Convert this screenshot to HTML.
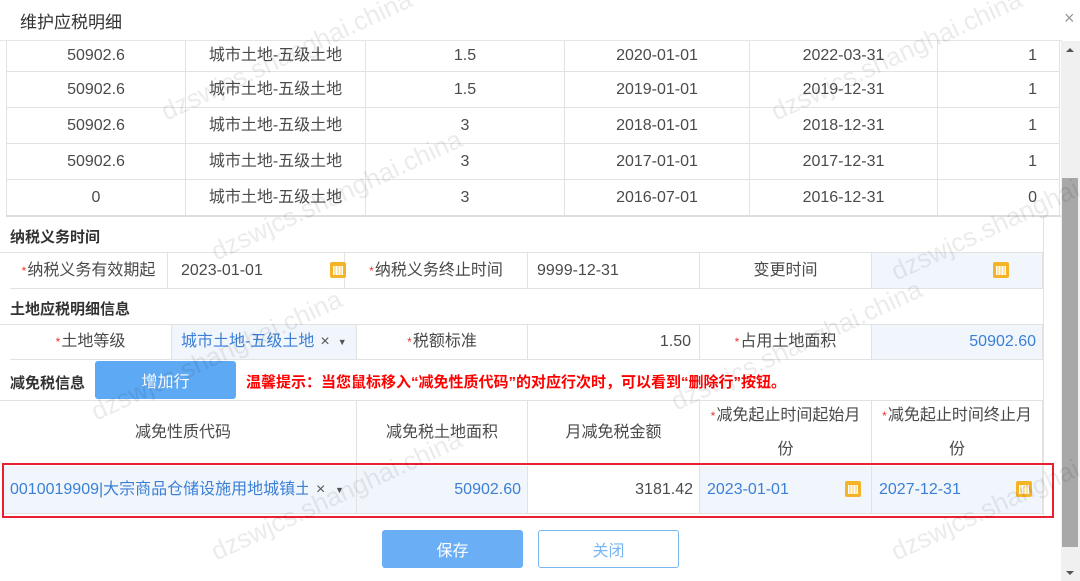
<!DOCTYPE html>
<html><head><meta charset="utf-8"><style>
*{margin:0;padding:0;box-sizing:border-box}
body{width:1080px;height:581px;overflow:hidden;background:#fff;font-family:"Liberation Sans","Noto Sans CJK SC",sans-serif;color:#4a4a4a;font-size:16px;position:relative}
.a{position:absolute}
.c{position:absolute;display:flex;align-items:center;justify-content:center;border-right:1px solid #e2e2e2;border-bottom:1px solid #e2e2e2;white-space:nowrap;overflow:hidden;line-height:20px}
.r{justify-content:flex-end;padding-right:8px}
.l{justify-content:flex-start;padding-left:9px}
.in{background:#f1f6fd}
.blue{color:#3b7fd6}
.st{color:#e33;font-size:12px;margin-right:1px}
.sec{position:absolute;left:10px;font-weight:bold;color:#333;font-size:15px}
.cal{position:absolute;width:16px;height:16px;background:#f5b328;border-radius:2px}
.cal:after{content:"";position:absolute;left:3px;top:4px;width:10px;height:9px;background:repeating-linear-gradient(90deg,#fff 0 1px,transparent 1px 3px),#fde3a5}
.wm{position:absolute;color:rgba(0,0,0,0.08);font-size:26px;transform:rotate(-25deg);white-space:nowrap}
</style></head><body>
<div class="a" style="left:20px;top:8px;font-size:17px;color:#333">维护应税明细</div>
<div class="a" style="left:1064px;top:8px;font-size:18px;color:#999">×</div>
<div class="a" style="left:0;top:40px;width:1062px;height:1px;background:#e5e5e5"></div>
<div class="a" style="left:6px;top:41px;width:1px;height:175px;background:#e2e2e2"></div>

<div id="tt"></div>
<script>
var rows=[["50902.6","城市土地-五级土地","1.5","2020-01-01","2022-03-31","1"],["50902.6","城市土地-五级土地","1.5","2019-01-01","2019-12-31","1"],["50902.6","城市土地-五级土地","3","2018-01-01","2018-12-31","1"],["50902.6","城市土地-五级土地","3","2017-01-01","2017-12-31","1"],["0","城市土地-五级土地","3","2016-07-01","2016-12-31","0"]];
var xs=[7,186,366,565,750,938,1060];var ys=[41,72,108,144,180,216];var h="";
for(var i=0;i<5;i++)for(var j=0;j<6;j++){h+='<div class="c'+(j==5?' r':'')+'" style="left:'+xs[j]+'px;top:'+ys[i]+'px;width:'+(xs[j+1]-xs[j])+'px;height:'+(ys[i+1]-ys[i])+'px;'+(j==5?'padding-right:22px':'')+'">'+rows[i][j]+'</div>'}
document.getElementById('tt').innerHTML=h;
</script>
<div class="a" style="left:6px;top:215px;width:1056px;height:2px;background:#ddd"></div>

<div class="a" style="left:1061px;top:41px;width:19px;height:540px;background:#f0f0f0"></div>
<div class="a" style="left:1066px;top:48px;width:0;height:0;border-left:4px solid transparent;border-right:4px solid transparent;border-bottom:4px solid #555"></div>
<div class="a" style="left:1062px;top:178px;width:16px;height:369px;background:#a8a8a8"></div>
<div class="a" style="left:1066px;top:571px;width:0;height:0;border-left:4px solid transparent;border-right:4px solid transparent;border-top:4px solid #555"></div>
<div class="a" style="left:1043px;top:216px;width:1px;height:300px;background:#e2e2e2"></div>

<div class="sec" style="top:226px">纳税义务时间</div>
<div class="a" style="left:0;top:252px;width:1043px;height:1px;background:#e2e2e2"></div>
<div class="c" style="left:10px;top:253px;width:158px;height:36px"><span class="st">*</span>纳税义务有效期起</div>
<div class="c l" style="left:168px;top:253px;width:177px;height:36px;padding-left:13px">2023-01-01</div><div class="cal" style="left:330px;top:262px"></div>
<div class="c" style="left:345px;top:253px;width:183px;height:36px"><span class="st">*</span>纳税义务终止时间</div>
<div class="c l" style="left:528px;top:253px;width:172px;height:36px">9999-12-31</div>
<div class="c" style="left:700px;top:253px;width:172px;height:36px">变更时间</div>
<div class="c in" style="left:872px;top:253px;width:171px;height:36px"></div><div class="cal" style="left:993px;top:262px"></div>

<div class="sec" style="top:298px">土地应税明细信息</div>
<div class="a" style="left:0;top:324px;width:1043px;height:1px;background:#e2e2e2"></div>
<div class="c" style="left:10px;top:325px;width:162px;height:35px"><span class="st">*</span>土地等级</div>
<div class="c l in blue" style="left:172px;top:325px;width:185px;height:35px">城市土地-五级土地<span style="color:#555;margin-left:6px">×</span><span style="color:#555;margin-left:8px;font-size:9px">▼</span></div>
<div class="c" style="left:357px;top:325px;width:171px;height:35px"><span class="st">*</span>税额标准</div>
<div class="c r" style="left:528px;top:325px;width:172px;height:35px">1.50</div>
<div class="c" style="left:700px;top:325px;width:172px;height:35px"><span class="st">*</span>占用土地面积</div>
<div class="c r in blue" style="left:872px;top:325px;width:171px;height:35px;padding-right:6px">50902.60</div>

<div class="sec" style="top:372px">减免税信息</div>
<div class="a" style="left:95px;top:361px;width:141px;height:38px;background:#5ea9f3;border-radius:3px;color:#fff;display:flex;align-items:center;justify-content:center;font-size:16px">增加行</div>
<div class="a" style="left:246px;top:371px;color:#f00;font-weight:bold;font-size:15px">温馨提示：当您鼠标移入“减免性质代码”的对应行次时，可以看到“删除行”按钮。</div>
<div class="a" style="left:0;top:400px;width:1043px;height:1px;background:#e2e2e2"></div>
<div class="c" style="left:10px;top:401px;width:347px;height:64px">减免性质代码</div>
<div class="c" style="left:357px;top:401px;width:171px;height:64px">减免税土地面积</div>
<div class="c" style="left:528px;top:401px;width:172px;height:64px">月减免税金额</div>
<div class="c" style="left:700px;top:401px;width:172px;height:64px;text-align:center;white-space:normal;line-height:34px;padding:0 8px"><div><span class="st">*</span>减免起止时间起始月份</div></div>
<div class="c" style="left:872px;top:401px;width:171px;height:64px;text-align:center;white-space:normal;line-height:34px;padding:0 8px"><div><span class="st">*</span>减免起止时间终止月份</div></div>

<div class="c in blue" style="left:3px;top:466px;width:354px;height:48px;justify-content:flex-start"><span style="position:absolute;left:7px;width:298px;overflow:hidden">0010019909|大宗商品仓储设施用地城镇土地</span><span style="position:absolute;left:313px;color:#555">×</span><span style="position:absolute;left:332px;color:#555;font-size:9px">▼</span></div>
<div class="c r in blue" style="left:357px;top:466px;width:171px;height:48px;padding-right:6px">50902.60</div>
<div class="c r" style="left:528px;top:466px;width:172px;height:48px;padding-right:6px">3181.42</div>
<div class="c l in blue" style="left:700px;top:466px;width:172px;height:48px;padding-left:7px">2023-01-01</div><div class="cal" style="left:845px;top:481px"></div>
<div class="c l in blue" style="left:872px;top:466px;width:171px;height:48px;padding-left:7px">2027-12-31</div><div class="cal" style="left:1016px;top:481px"></div>
<div class="a" style="left:2px;top:463px;width:1052px;height:55px;border:2px solid #e8202f"></div>

<div class="a" style="left:382px;top:530px;width:141px;height:38px;background:#6aaef5;border-radius:3px;color:#fff;display:flex;align-items:center;justify-content:center;font-size:16px">保存</div>
<div class="a" style="left:538px;top:530px;width:141px;height:38px;border:1px solid #7ab6f0;border-radius:3px;color:#7ab6f0;display:flex;align-items:center;justify-content:center;font-size:16px">关闭</div>

<div class="wm" style="left:150px;top:40px">dzswjcs.shanghai.china</div>
<div class="wm" style="left:760px;top:40px">dzswjcs.shanghai.china</div>
<div class="wm" style="left:200px;top:180px">dzswjcs.shanghai.china</div>
<div class="wm" style="left:880px;top:200px">dzswjcs.shanghai.china</div>
<div class="wm" style="left:80px;top:340px">dzswjcs.shanghai.china</div>
<div class="wm" style="left:660px;top:330px">dzswjcs.shanghai.china</div>
<div class="wm" style="left:200px;top:480px">dzswjcs.shanghai.china</div>
<div class="wm" style="left:880px;top:480px">dzswjcs.shanghai.china</div>
</body></html>
